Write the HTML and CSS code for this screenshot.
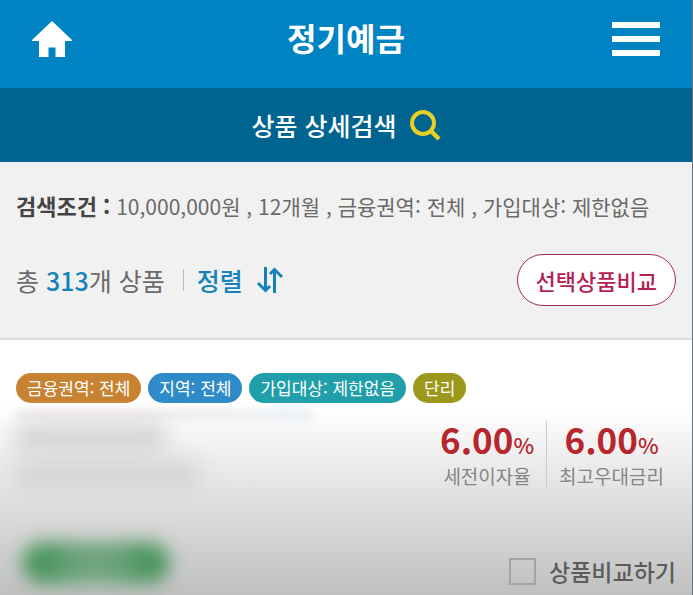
FILE: index.html
```html
<!DOCTYPE html>
<html lang="ko">
<head>
	<meta charset="UTF-8">
	<meta name="viewport" content="width=device-width, initial-scale=1">
	<title>정기예금</title>
	<link rel="stylesheet" href="styles.css">
</head>
<body>
	<header class="header">
		<a class="home" href="#" aria-label="홈">
			<svg width="40" height="36" viewBox="0 0 40 36"><path d="M20 0L40 19v1h-7v16H23.500v-9.500h-7V36H7V20H0v-1z" fill="#fff"/></svg>
		</a>
		<h1 class="title">정기예금</h1>
		<button class="menu" type="button" aria-label="메뉴">
			<span></span>
			<span></span>
			<span></span>
		</button>
	</header>

	<button class="detail-search" type="button">
		상품 상세검색
		<svg width="32" height="32" viewBox="0 0 32 32" fill="none" stroke="#e8d020"><circle cx="14" cy="14" r="11" stroke-width="4"/><path d="M21.500 21.500L30 30" stroke-width="4.500"/></svg>
	</button>

	<section class="summary">
		<p class="condition"><strong>검색조건 :</strong> <span>10,000,000원 , 12개월 , 금융권역: 전체 , 가입대상: 제한없음</span></p>
		<div class="toolbar">
			<p class="total">총 <em>313</em>개 상품</p>
			<button class="sort" type="button">
				정렬
				<svg width="28" height="26" viewBox="0 0 28 26" fill="none" stroke="#1583ba" stroke-width="3"><path d="M9.500 0v23M2 16l7.500 7.500L14 19M18.500 26V3M14 7l4.500-4.500L26 10"/></svg>
			</button>
			<button class="compare" type="button">선택상품비교</button>
		</div>
	</section>

	<main class="product">
		<ul class="tags">
			<li class="tag area">금융권역: 전체</li>
			<li class="tag region">지역: 전체</li>
			<li class="tag target">가입대상: 제한없음</li>
			<li class="tag interest">단리</li>
		</ul>
		<div class="product-body">
			<!-- 은행명, 상품명은 가림 처리 -->
			<div class="masked" aria-hidden="true">
				<div class="mask-top"></div>
				<div class="mask-bank"></div>
				<div class="mask-name"></div>
				<div class="mask-btn"></div>
			</div>
			<div class="info">
				<dl class="rates">
					<div class="rate">
						<dt>세전이자율</dt>
						<dd>6.00<small>%</small></dd>
					</div>
					<div class="rate">
						<dt>최고우대금리</dt>
						<dd>6.00<small>%</small></dd>
					</div>
				</dl>
				<label class="check"><input type="checkbox">상품비교하기</label>
			</div>
		</div>
	</main>
</body>
</html>
```
FILE: styles.css
```css
* {
	box-sizing: border-box;
}

body,
h1,
p,
ul,
dl,
dd {
	margin: 0;
	padding: 0;
}

body {
	display: flex;
	flex-direction: column;
	min-height: 100vh;
	border-right: 1px solid #6b7175;
	font-family: "Noto Sans CJK KR", sans-serif;
	color: #6a6a6a;
	background: #fff;
}

button {
	padding: 0;
	border: 0;
	background: none;
	font-family: inherit;
	cursor: pointer;
}

svg {
	display: block;
}

.header {
	display: grid;
	grid-template-columns: 1fr auto 1fr;
	align-items: center;
	height: 88px;
	padding: 0 32px 10px;
	background: #0083c2;
}

.home {
	justify-self: start;
}

.title {
	padding-bottom: 4px;
	font-size: 32px;
	line-height: 36px;
	font-weight: 700;
	color: #fff;
}

.menu {
	display: flex;
	flex-direction: column;
	justify-self: end;
	gap: 8px;
	width: 48px;
}

.menu span {
	height: 6px;
	background: #fff;
}

.detail-search {
	display: flex;
	justify-content: center;
	align-items: center;
	gap: 12px;
	height: 74px;
	font-size: 25px;
	font-weight: 500;
	color: #fff;
	background: #006491;
}

.summary {
	padding: 27px 16px 32px;
	border-bottom: 2px solid #dcdcdc;
	background: #f1f1f1;
}

.condition {
	font-size: 21px;
	line-height: 32px;
}

.condition strong {
	font-size: 22px;
	color: #444;
}

.toolbar {
	display: flex;
	align-items: center;
	margin-top: 32px;
}

.total {
	font-size: 25px;
	line-height: 32px;
}

.total em {
	font-style: normal;
	font-weight: 500;
	color: #1583ba;
}

.sort {
	display: flex;
	align-items: center;
	gap: 13px;
	margin-left: 18px;
	font-size: 25px;
	line-height: 32px;
	font-weight: 500;
	color: #1583ba;
}

.sort::before {
	content: "";
	width: 1px;
	height: 22px;
	background: #bbb;
}

.compare {
	height: 52px;
	margin-left: auto;
	padding: 0 18px;
	border: 1px solid #a8285c;
	border-radius: 26px;
	font-size: 22px;
	font-weight: 500;
	color: #b51f56;
	background: #fff;
}

.product {
	display: flex;
	flex-direction: column;
	flex: 1;
	padding: 33px 16px 8px;
	background: linear-gradient(#fff 70px, #f0f0f0 110px, #c0c0c0);
}

.tags {
	display: flex;
	gap: 7px;
	list-style: none;
}

.tag {
	padding: 0 11px;
	border-radius: 15px;
	font-size: 17px;
	line-height: 30px;
	color: #fff;
}

.area {
	background: #c78331;
}

.region {
	background: #2e8bc7;
}

.target {
	background: #209faa;
}

.interest {
	background: #9b991b;
}

.product-body {
	display: flex;
	justify-content: space-between;
	flex: 1;
}

.masked {
	display: flex;
	flex-direction: column;
	width: 296px;
}

.mask-top {
	height: 10px;
	margin-top: 7px;
	background: linear-gradient(90deg, #eeeae8 45%, #e6edf3);
	filter: blur(4px);
}

.mask-bank {
	width: 150px;
	height: 28px;
	margin-top: 4px;
	background: #d2d2d2;
	filter: blur(11px);
}

.mask-name {
	width: 182px;
	height: 26px;
	margin-top: 10px;
	background: #d2d2d2;
	filter: blur(11px);
}

.mask-btn {
	width: 148px;
	height: 42px;
	margin: 54px 0 0 6px;
	border-radius: 21px;
	background: linear-gradient(90deg, #4b965f 15%, #6fa37d 40%, #6fa37d 60%, #4b965f 85%);
	filter: blur(9px);
}

.info {
	display: flex;
	flex-direction: column;
	justify-content: space-between;
	align-items: flex-end;
	padding-top: 18px;
}

.rates {
	display: flex;
}

.rate {
	display: flex;
	flex-direction: column-reverse;
	align-items: center;
	gap: 6px;
	padding: 0 12px;
}

.rate + .rate {
	border-left: 1px solid #ccc;
}

.rate dt {
	font-size: 19px;
	line-height: 26px;
	color: #858585;
}

.rate dd {
	font-size: 35px;
	line-height: 36px;
	font-weight: 700;
	color: #b8262d;
}

.rate small {
	font-size: 22px;
	line-height: 22px;
	font-weight: 500;
}

.check {
	display: flex;
	align-items: center;
	gap: 13px;
	font-size: 23px;
	line-height: 32px;
	font-weight: 500;
	color: #5c5c5c;
}

.check input {
	appearance: none;
	width: 27px;
	height: 27px;
	margin: 0;
	border: 2px solid #a4a4a4;
}
```
